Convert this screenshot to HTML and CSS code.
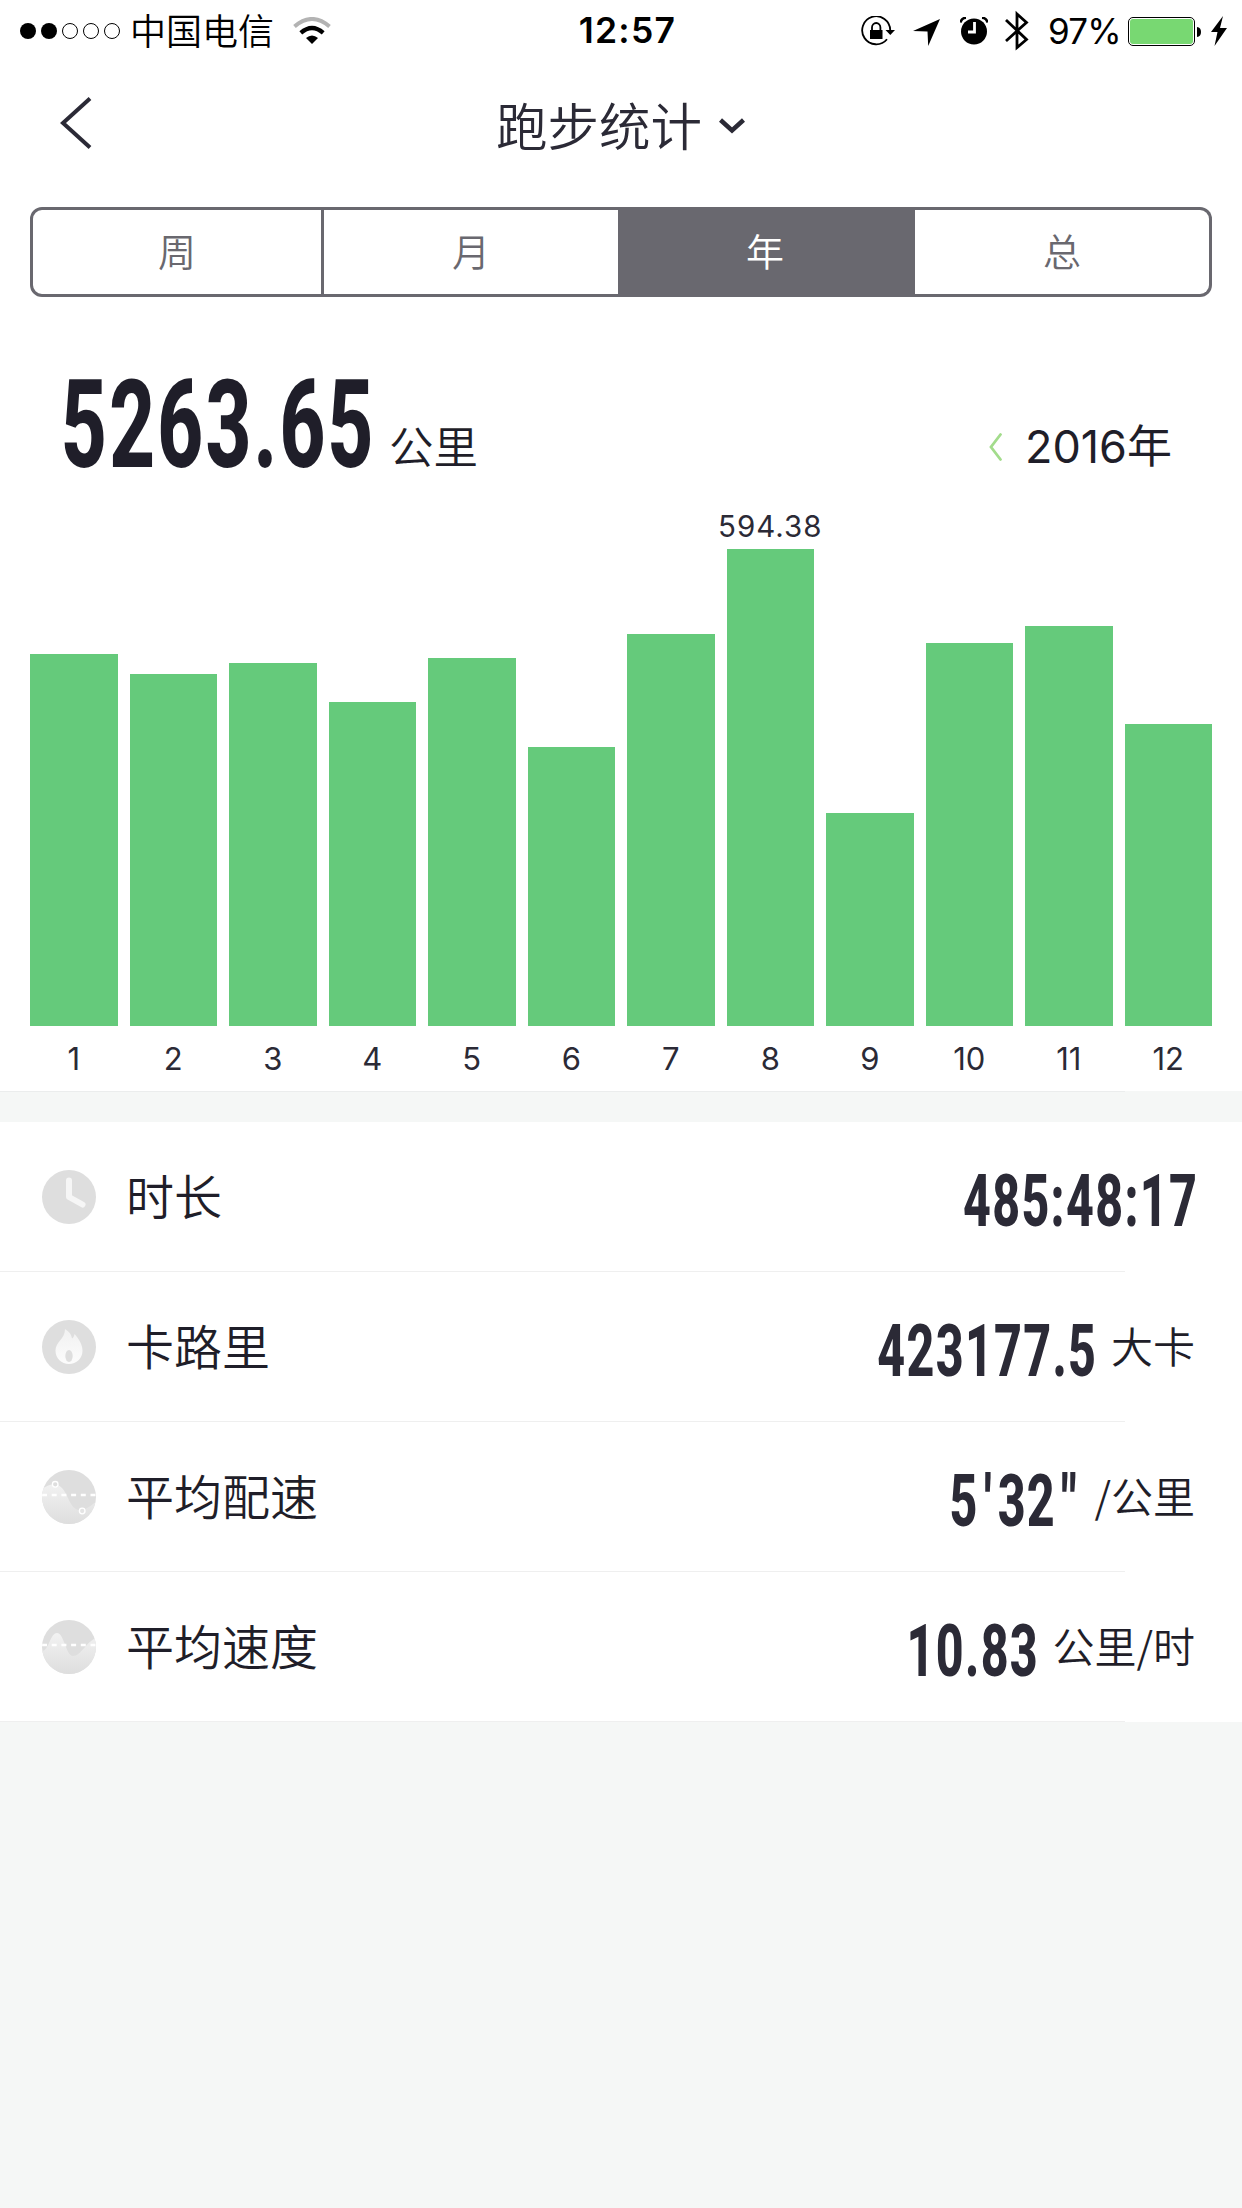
FILE: index.html
```
<!DOCTYPE html>
<html lang="zh-CN">
<head>
  <title>跑步统计</title>
  <meta charset="utf-8">
  <meta name="viewport" content="width=device-width, initial-scale=1.0">
  <link rel="stylesheet" href="styles.css">
</head>
<body>
  <div class="status-bar">
    <div class="status-left">
      <svg class="signal" width="100" height="16" viewBox="0 0 100 16">
        <circle cx="8" cy="8" r="8"/>
        <circle cx="29" cy="8" r="8"/>
        <circle class="off" cx="50" cy="8" r="7.5"/>
        <circle class="off" cx="71" cy="8" r="7.5"/>
        <circle class="off" cx="92" cy="8" r="7.5"/>
      </svg>
      <span class="carrier">中国电信</span>
      <svg class="wifi" width="38" height="28" viewBox="0 0 38 28">
        <path d="M1.5 9.5Q19-5.5 36.5 9.5" fill="none" stroke="#b3b3b3" stroke-width="4"/>
        <path d="M7.800 15.800Q19 6 30.200 15.800" fill="none" stroke="#000" stroke-width="4.300"/>
        <path d="M13 21Q19 16 25 21L19 27Z"/>
      </svg>
    </div>
    <div class="time">12:57</div>
    <div class="status-right">
      <svg class="lock" width="34" height="30" viewBox="0 0 34 30">
        <path d="M26 23.200A14 14 0 1 1 29.200 14" fill="none" stroke="#000" stroke-width="1.800"/>
        <path d="M24.500 14H34L29.300 19Z"/>
        <rect x="9" y="14" width="12.500" height="9"/>
        <path d="M11 14V11.500A4.200 4.500 0 0 1 19.400 11.500V14" fill="none" stroke="#000" stroke-width="1.800"/>
      </svg>
      <svg class="location" width="27" height="27" viewBox="0 0 27 27">
        <path d="M27 0L15.200 27L14.500 12.500L0 12Z"/>
      </svg>
      <svg class="alarm" width="28" height="28" viewBox="0 0 28 28">
        <circle cx="14" cy="14.500" r="13"/>
        <path d="M.5 5.500Q1.500 1 6 .8M22 .8Q26.500 1 27.500 5.500" fill="none" stroke="#000" stroke-width="2.600"/>
        <path d="M14.500 5V15H8" fill="none" stroke="#fff" stroke-width="2.800"/>
      </svg>
      <svg class="bluetooth" width="24" height="42" viewBox="0 0 24 42">
        <path d="M1 10L21.500 29.500L12 37.500V4L21.500 12.500L1 31" fill="none" stroke="#000" stroke-width="2.800"/>
      </svg>
      <span class="percent">97%</span>
      <svg class="battery" width="73" height="29" viewBox="0 0 73 29">
        <rect x=".5" y=".5" width="66" height="28" rx="4.500" fill="#fff" stroke="#000"/>
        <rect x="2" y="2" width="63" height="25" rx="3" fill="#78d872"/>
        <path d="M69 10Q73 10.500 73 15T69 20Z"/>
      </svg>
      <svg class="bolt" width="16" height="30" viewBox="0 0 16 30">
        <path d="M12 0L0 16H6.500L3.500 30L16 12H9Z"/>
      </svg>
    </div>
  </div>

  <div class="nav">
    <svg class="back" width="34" height="54" viewBox="0 0 34 54">
      <path d="M31 2.500L4 27L31 51.500" fill="none" stroke="#2b2a36" stroke-width="4"/>
    </svg>
    <div class="title">跑步统计</div>
    <svg class="chevron" width="26" height="16" viewBox="0 0 26 16">
      <path d="M1.500 2L13 12.500L24.500 2" fill="none" stroke="#2b2a36" stroke-width="4.500"/>
    </svg>
  </div>

  <div class="tabs">
    <div class="tab">周</div>
    <div class="tab">月</div>
    <div class="tab active">年</div>
    <div class="tab">总</div>
  </div>

  <div class="summary">
    <div class="total">
      <span class="total-num">5263.65</span>
      <span class="total-unit">公里</span>
    </div>
    <div class="year">
      <svg width="13" height="28" viewBox="0 0 13 28">
        <path d="M11.500 1.500L2 14L11.500 26.500" fill="none" stroke="#a3dc8c" stroke-width="2.800" stroke-linecap="round"/>
      </svg>
      <span class="year-text">2016年</span>
    </div>
  </div>

  <div class="chart">
    <div class="col"><div class="bar" style="height: 372px"></div><span class="month">1</span></div>
    <div class="col"><div class="bar" style="height: 352px"></div><span class="month">2</span></div>
    <div class="col"><div class="bar" style="height: 363px"></div><span class="month">3</span></div>
    <div class="col"><div class="bar" style="height: 324px"></div><span class="month">4</span></div>
    <div class="col"><div class="bar" style="height: 368px"></div><span class="month">5</span></div>
    <div class="col"><div class="bar" style="height: 279px"></div><span class="month">6</span></div>
    <div class="col"><div class="bar" style="height: 392px"></div><span class="month">7</span></div>
    <div class="col"><span class="peak">594.38</span><div class="bar" style="height: 477px"></div><span class="month">8</span></div>
    <div class="col"><div class="bar" style="height: 213px"></div><span class="month">9</span></div>
    <div class="col"><div class="bar" style="height: 383px"></div><span class="month">10</span></div>
    <div class="col"><div class="bar" style="height: 400px"></div><span class="month">11</span></div>
    <div class="col"><div class="bar" style="height: 302px"></div><span class="month">12</span></div>
  </div>

  <div class="divider"></div>

  <div class="list">
    <div class="row">
      <svg class="icon" viewBox="0 0 54 54">
        <defs>
          <linearGradient id="shine" x1="0" y1="0" x2="0" y2="1">
            <stop offset="0" stop-color="#f1f1f1"/>
            <stop offset="1" stop-color="#fcfcfc"/>
          </linearGradient>
          <linearGradient id="wave" gradientUnits="userSpaceOnUse" x1="0" y1="12" x2="0" y2="54">
            <stop offset="0" stop-color="#f3f3f3"/>
            <stop offset="1" stop-color="#dedede"/>
          </linearGradient>
          <clipPath id="disc"><circle cx="27" cy="27" r="27"/></clipPath>
        </defs>
        <circle cx="27" cy="27" r="27" fill="#dedede"/>
        <path d="M27 10.500V27L40.500 34.500" fill="none" stroke="#f6f6f6" stroke-width="6" stroke-linecap="round" stroke-linejoin="round"/>
      </svg>
      <span class="name">时长</span>
      <span class="num">485:48:17</span>
    </div>
    <div class="row">
      <svg class="icon" viewBox="0 0 54 54">
        <circle cx="27" cy="27" r="27" fill="#dedede"/>
        <path d="M23 9C29 13 29.500 16 30 18.500C31.500 17.500 32 16 32.500 14C36 18 40.500 24 40.500 30.500C40.500 38.500 34.500 44 27 44S13.500 38.500 13.500 30.500C13.500 22 23 19 23 9Z" fill="url(#shine)"/>
        <ellipse cx="27" cy="36" rx="3.700" ry="6" fill="#dedede"/>
      </svg>
      <span class="name">卡路里</span>
      <span class="num">423177.5</span>
      <span class="unit">大卡</span>
    </div>
    <div class="row">
      <svg class="icon" viewBox="0 0 54 54">
        <circle cx="27" cy="27" r="27" fill="#dedede"/>
        <g clip-path="url(#disc)">
          <path d="M0 19C6 15 13 11 20 18C26 24 28 39 37 40C44 41 50 34 54 32V54H0Z" fill="url(#wave)"/>
          <path d="M0 25H54" stroke="#fff" stroke-width="2.400" stroke-dasharray="5 4.700"/>
        </g>
        <circle cx="13.200" cy="14.300" r="2.800" fill="#dedede" stroke="#fff" stroke-width="1.300"/>
        <circle cx="40.200" cy="41" r="2.800" fill="#e4e4e4" stroke="#fff" stroke-width="1.300"/>
      </svg>
      <span class="name">平均配速</span>
      <span class="num">5<span class="tick">'</span>32<span class="tick">"</span></span>
      <span class="unit">/公里</span>
    </div>
    <div class="row">
      <svg class="icon" viewBox="0 0 54 54">
        <circle cx="27" cy="27" r="27" fill="#dedede"/>
        <g clip-path="url(#disc)">
          <path d="M0 31C7 31 8 13 15 13C22 13 24 36 31 36C39 36 44 22 54 18V54H0Z" fill="url(#wave)"/>
          <path d="M0 25H54" stroke="#fff" stroke-width="2.400" stroke-dasharray="5 4.700"/>
        </g>
      </svg>
      <span class="name">平均速度</span>
      <span class="num">10.83</span>
      <span class="unit">公里/时</span>
    </div>
  </div>
</body>
</html>
```
FILE: styles.css
```
* {
  box-sizing: border-box;
}
body {
  margin: 0;
  width: 1242px;
  min-height: 2208px;
  font-family: Inter, "Noto Sans CJK SC", sans-serif;
  font-weight: 350;
  color: #1f1e29;
  background-color: #f5f7f6;
}
svg {
  display: block;
  flex-shrink: 0;
}
.status-bar {
  display: grid;
  grid-template-columns: 1fr auto 1fr;
  align-items: center;
  height: 60px;
  padding: 0 15px 0 20px;
  background: white;
  color: #000;
}
.status-left,
.status-right {
  display: flex;
  align-items: center;
  height: 60px;
  white-space: nowrap;
}
.status-right {
  justify-content: flex-end;
}
.signal .off {
  fill: none;
  stroke: #000;
  stroke-width: 1;
}
.carrier {
  margin: 0 0 4px 10px;
  font-family: "Noto Sans CJK SC", sans-serif;
  font-size: 36px;
  line-height: 56px;
}
.wifi {
  margin-left: 19px;
}
.time {
  padding-left: 8px;
  font-size: 35.5px;
  font-weight: 570;
  line-height: 62px;
  letter-spacing: 1.3px;
}
.location {
  margin: 2px 0 0 18px;
}
.alarm {
  margin-left: 20px;
}
.bluetooth {
  margin-left: 17px;
}
.percent {
  width: 72px;
  margin: 0 8px 0 19px;
  font-size: 35px;
  font-weight: 380;
  line-height: 62px;
  letter-spacing: -0.8px;
}
.bolt {
  margin-left: 10px;
}
.nav {
  display: grid;
  grid-template-columns: 437px auto 1fr;
  align-items: center;
  height: 147px;
  padding: 0 0 15px 59px;
  background: white;
}
.nav .back {
  margin-top: -6px;
}
.title {
  margin-top: -5px;
  font-family: "Noto Sans CJK SC", sans-serif;
  font-size: 51.5px;
  line-height: 70px;
  color: #2b2a36;
}
.chevron {
  margin-left: 17px;
}
.tabs {
  display: flex;
  height: 90px;
  background: white;
  padding: 0 30px;
}
.tab {
  width: 297px;
  border: 3px solid #69686f;
  border-left: none;
  font-family: "Noto Sans CJK SC", sans-serif;
  font-size: 38px;
  line-height: 80px;
  text-align: center;
  color: #69686f;
}
.tab:first-child {
  width: 294px;
  border-left: 3px solid #69686f;
  border-radius: 12px 0 0 12px;
}
.tab:nth-child(2) {
  width: 294px;
  border-right: none;
}
.tab:last-child {
  border-radius: 0 12px 12px 0;
}
.tab.active {
  background: #69686f;
  color: white;
}
.summary {
  display: flex;
  justify-content: space-between;
  align-items: flex-end;
  height: 203px;
  padding: 0 70px 20px 61px;
  background: white;
}
.total,
.year {
  display: flex;
  align-items: flex-end;
}
.total-num,
.num {
  font-family: Roboto, sans-serif;
  font-weight: 800;
  white-space: nowrap;
}
/* condensed digits */
.total-num {
  width: 314px;
  margin-bottom: 11px;
  font-size: 122px;
  line-height: 86px;
  letter-spacing: 3.5px;
  transform: scaleX(0.652);
  transform-origin: left;
}
.num {
  padding-top: 7px;
  font-size: 73px;
  line-height: 80px;
  letter-spacing: 2px;
  color: #2b2a36;
  transform: scaleX(0.662);
  transform-origin: right;
}
.num:last-child {
  margin-right: -3px;
}
.tick {
  margin-left: 8px;
  letter-spacing: 9px;
}
.tick:last-child {
  letter-spacing: 5px;
}
.total-unit {
  margin-left: 14px;
  font-size: 44.5px;
  line-height: 64px;
}
.year {
  gap: 23px;
  font-size: 45px;
  line-height: 66px;
}
.year svg {
  margin-bottom: 19px;
}
.year-text {
  font-weight: 380;
}
.chart {
  display: flex;
  gap: 12px;
  align-items: flex-end;
  height: 591px;
  padding: 0 30px;
  background: white;
}
.col {
  display: flex;
  flex: 1 1 0;
  min-width: 0;
  flex-direction: column;
  align-items: center;
  font-weight: 380;
  color: #2b2a36;
}
.bar {
  width: 100%;
  background: #65ca7b;
}
.peak {
  font-size: 29.5px;
  line-height: 46px;
  letter-spacing: 1px;
}
.month {
  height: 65px;
  font-size: 31px;
  line-height: 65px;
}
.divider {
  height: 31px;
  background: linear-gradient(#ebeded, #ebeded) 0 0 / 1125px 1px no-repeat, #f5f7f6;
}
.list {
  background: white;
}
.row {
  display: flex;
  align-items: center;
  height: 150px;
  padding: 0 47px 0 42px;
  background: linear-gradient(#efefef, #efefef) 0 100% / 1125px 1px no-repeat;
}
.icon {
  width: 54px;
  height: 54px;
}
.name {
  flex: 1;
  margin: 0 0 6px 30px;
  font-family: "Noto Sans CJK SC", sans-serif;
  font-size: 48px;
}
.unit {
  margin: 0 0 6px 14px;
  font-family: "Noto Sans CJK SC", sans-serif;
  font-size: 42px;
}
```
